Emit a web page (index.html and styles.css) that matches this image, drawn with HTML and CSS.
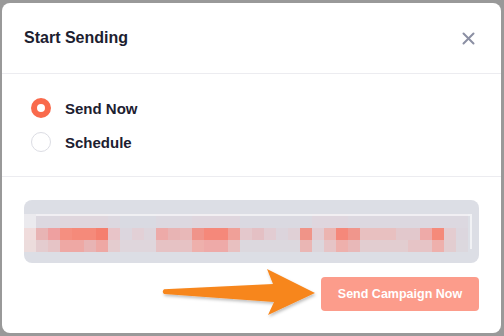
FILE: index.html
```html
<!DOCTYPE html>
<html lang="en">
<head>
  <meta charset="UTF-8" />
  <meta name="viewport" content="width=device-width, initial-scale=1" />
  <title>Start Sending</title>
  <link rel="stylesheet" href="styles.css">
</head>
<body>

  <div class="modal" role="dialog" aria-labelledby="modalTitle">
    <header class="modal-header">
      <h2 id="modalTitle">Start Sending</h2>
      <button class="close-btn" aria-label="Close">
        <svg width="13" height="13" viewBox="0 0 13 13" aria-hidden="true">
          <path d="M1.5 1.5 L11.5 11.5 M11.5 1.5 L1.5 11.5" stroke="#8b8fa3" stroke-width="2" stroke-linecap="round" fill="none"/>
        </svg>
      </button>
    </header>

    <section class="modal-body">
      <label class="radio-row">
        <span class="radio checked"></span>
        <span class="radio-label">Send Now</span>
      </label>
      <label class="radio-row">
        <span class="radio"></span>
        <span class="radio-label">Schedule</span>
      </label>
    </section>

    <footer class="modal-footer">
      <div class="preview-box">
        <div class="mosaic">
          <div class="mosaic-row row-top"></div>
          <div class="mosaic-row row-mid"></div>
          <div class="mosaic-row row-bottom"></div>
        </div>
      </div>
      <div class="actions">
        <button class="send-btn">Send Campaign Now</button>
      </div>
    </footer>

    <!-- annotation arrow pointing at the button -->
    <svg class="arrow" width="160" height="62" viewBox="0 0 160 62" aria-hidden="true">
      <defs>
        <filter id="arrowShadow" x="-10%" y="-20%" width="120%" height="150%">
          <feDropShadow dx="1" dy="2" stdDeviation="1.5" flood-color="#000" flood-opacity="0.25"/>
        </filter>
      </defs>
      <path d="M4 27.2 L113 22 L107 7 L155 31 L108 53 L114 40 L4 32 Q1.5 29.6 4 27.2 Z" fill="#f7861c" filter="url(#arrowShadow)"/>
    </svg>
  </div>

</body>
</html>
```

FILE: styles.css
```css
/* Base */
* {
  box-sizing: border-box;
}
body {
  margin: 0;
  font-family: 'Liberation Sans', Arial, sans-serif;
  background-color: #999;
  color: #1c2030;
  height: 336px;
  overflow: hidden;
}

/* Modal shell */
.modal {
  position: relative;
  margin: 3px 3px 0 2px;
  width: 499px;
  height: 330px;
  background-color: #fff;
  border-radius: 8px;
  display: flex;
  flex-direction: column;
}

/* Header */
.modal-header {
  height: 71px;
  padding: 0 26px 0 22px;
  display: flex;
  align-items: center;
  justify-content: space-between;
  border-bottom: 1px solid #ececf0;
}
.modal-header h2 {
  margin: 0;
  font-size: 16px;
  font-weight: 700;
  color: #1c2030;
}
.close-btn {
  border: none;
  background: none;
  padding: 0;
  width: 13px;
  height: 13px;
  display: flex;
  cursor: pointer;
}

/* Radio options */
.modal-body {
  padding: 24px 29px 24px;
  display: flex;
  flex-direction: column;
  gap: 14px;
  border-bottom: 1px solid #ececf0;
}
.radio-row {
  display: flex;
  align-items: center;
  gap: 14px;
  height: 20px;
  cursor: pointer;
}
.radio {
  width: 20px;
  height: 20px;
  border-radius: 50%;
  border: 1px solid #dcdde4;
  background-color: #fff;
}
.radio.checked {
  border: 6px solid #f96a4c;
}
.radio-label {
  font-size: 15px;
  font-weight: 700;
  color: #1c2030;
}

/* Footer with preview + button */
.modal-footer {
  padding: 23px 22px 0;
  display: flex;
  flex-direction: column;
  gap: 14px;
}
.preview-box {
  height: 63px;
  background-color: #dcdee5;
  border-radius: 8px;
  overflow: hidden;
  padding-top: 14px;
}
.mosaic {
  position: relative;
  width: 444px;
}
.mosaic::after {
  content: "";
  position: absolute;
  left: 12px;
  top: 0;
  width: 434px;
  height: 33px;
  border-top: 2px solid rgba(255, 255, 255, 0.6);
  border-right: 2px solid rgba(255, 255, 255, 0.6);
}
.mosaic-row {
  height: 12px;
}
.row-top {
  height: 14px;
  background: linear-gradient(90deg,
    #ebeaee 0 12px, #dcd8e0 12px 36px, #dfd6dd 36px 84px, #dcd8e0 84px 96px,
    #d9dae2 96px 132px, #dcd8e0 132px 168px, #dfd6de 168px 216px, #dad9e1 216px 288px,
    #dfd6de 288px 324px, #dcd8e0 324px 444px);
}
.row-mid {
  background: linear-gradient(90deg,
    #f0dcdc 0 12px, #e8b4b4 12px 24px, #eea0a0 24px 36px, #f58f80 36px 48px,
    #f58a7a 48px 72px, #f57f6e 72px 84px, #e8c4c8 84px 96px, #dcd6de 96px 108px,
    #e2d0d6 108px 120px, #ddd5dc 120px 132px, #edaaa8 132px 144px, #e8b4b4 144px 156px,
    #e8b8b8 156px 168px, #f0948a 168px 180px, #f5887a 180px 204px, #f0a098 204px 216px,
    #e4c8cc 216px 228px, #e4c0c4 228px 240px, #e2ccd2 240px 252px, #dcd4dc 252px 264px,
    #e0d0d6 264px 276px, #f09488 276px 288px, #e2ccd2 288px 300px, #ecb4b0 300px 312px,
    #f5887a 312px 324px, #f0968c 324px 336px, #e8c0c0 336px 372px, #e2c8cc 372px 396px,
    #eeaaa8 396px 408px, #f58a7a 408px 420px, #e4ccd0 420px 432px, #dcd6de 432px 444px);
}
.row-bottom {
  background: linear-gradient(90deg,
    #ecdcdc 0 12px, #e4cccf 12px 24px, #e6c4c6 24px 36px, #eea8a4 36px 60px,
    #e8b4b4 60px 72px, #eea8a4 72px 84px, #e4cccf 84px 96px, #dfd6dc 96px 132px,
    #e6c2c4 132px 168px, #eeb0ac 168px 180px, #eeaaa8 180px 204px, #e8c0c0 204px 216px,
    #dcd8de 216px 276px, #eab6b4 276px 288px, #dcd6dc 288px 300px, #e6c4c6 300px 312px,
    #eeb0ac 312px 324px, #e8b8b8 324px 336px, #e2cdd0 336px 384px, #e6c4c6 384px 408px,
    #eeb0ac 408px 420px, #e2cdd0 420px 432px, #dcd8de 432px 444px);
}

.actions {
  display: flex;
  justify-content: flex-end;
}
.send-btn {
  width: 158px;
  height: 34px;
  border: none;
  border-radius: 4px;
  background-color: #fc9c8b;
  color: #fff;
  font-family: inherit;
  font-size: 12.5px;
  font-weight: 700;
  cursor: pointer;
}

/* Annotation arrow overlay */
.arrow {
  position: absolute;
  left: 158px;
  top: 259px;
  overflow: visible;
}
```
